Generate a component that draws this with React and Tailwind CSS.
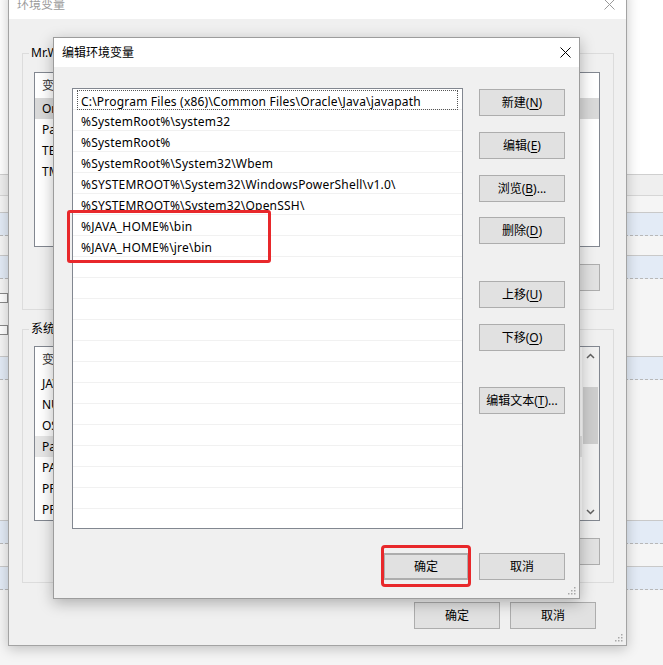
import React from "react";

function Btn({ children, className = "" }) {
  return (
    <div
      className={
        "h-[27px] w-[86px] shrink-0 flex items-center justify-center bg-[#e1e1e1] border border-[#adadad] text-[12px] text-black leading-none " +
        className
      }
    >
      {children}
    </div>
  );
}

function U({ children }) {
  return <span className="underline underline-offset-[2px]">{children}</span>;
}

function XIcon({ color = "#000" }) {
  return (
    <svg width="11" height="11" viewBox="0 0 11 11">
      <path d="M0.5 0.5 L10.5 10.5 M10.5 0.5 L0.5 10.5" stroke={color} strokeWidth="1" fill="none" />
    </svg>
  );
}

function Grip({ className = "" }) {
  const dots = [
    [8, 2],
    [8, 5],
    [5, 5],
    [8, 8],
    [5, 8],
    [2, 8],
  ];
  return (
    <svg className={className} width="11" height="11" viewBox="0 0 11 11">
      {dots.map(([x, y], i) => (
        <rect key={i} x={x} y={y} width="1.5" height="1.5" fill="#a8a8a8" />
      ))}
    </svg>
  );
}

function Band() {
  return (
    <div className="flex flex-col">
      <div className="h-px bg-[#c9c9c9]" />
      <div className="h-[23px] bg-[#e3ebf6] border-b border-dashed border-[#b8b8b8]" />
    </div>
  );
}

const pathRows = [
  "C:\\Program Files (x86)\\Common Files\\Oracle\\Java\\javapath",
  "%SystemRoot%\\system32",
  "%SystemRoot%",
  "%SystemRoot%\\System32\\Wbem",
  "%SYSTEMROOT%\\System32\\WindowsPowerShell\\v1.0\\",
  "%SYSTEMROOT%\\System32\\OpenSSH\\",
  "%JAVA_HOME%\\bin",
  "%JAVA_HOME%\\jre\\bin",
];

export default function App() {
  const rows = [];
  for (let i = 0; i < 21; i++) rows.push(pathRows[i] || "");

  return (
    <div className="relative w-[663px] h-[665px] overflow-hidden bg-white font-['Noto_Sans','Noto_Sans_CJK_SC',sans-serif] text-[12px] text-black">
      {/* Background window */}
      <div className="absolute inset-0 flex flex-col">
        <div className="h-[174px] bg-white" />
        <div className="h-px bg-[#cfcfcf]" />
        <div className="h-[20px] bg-[#efefef]" />
        <div className="h-px bg-[#d6d6d6]" />
        <div className="h-[16px] bg-[#f5f5f5]" />
        <Band />
        <div className="h-[19px] bg-[#f5f5f5]" />
        <Band />
        <div className="h-[77px] bg-[#f5f5f5]" />
        <Band />
        <div className="h-[140px] bg-[#f5f5f5]" />
        <Band />
        <div className="h-[22px] bg-[#f5f5f5]" />
        <Band />
        <div className="flex-1 bg-[#f5f5f5]" />
      </div>
      <div className="absolute left-[-2px] top-[293px] w-[10px] h-[10px] border border-[#8a8a8a] bg-white" />
      <div className="absolute left-[-2px] top-[325px] w-[10px] h-[10px] border border-[#8a8a8a] bg-white" />

      {/* Outer dialog: 环境变量 */}
      <div className="absolute left-[8px] top-[-12px] w-[619px] h-[658px] flex flex-col border border-[#a3a3a3] shadow-[0_3px_12px_rgba(0,0,0,0.22)]">
        <div className="h-[30px] bg-white flex items-center justify-between pl-[8px] pr-[11px]">
          <span className="text-[#9a9a9a] text-[12px] pt-[1px]">环境变量</span>
          <XIcon color="#9a9a9a" />
        </div>
        <div className="relative flex-1 bg-[#f0f0f0] flex flex-col pl-[13px] pt-[34px]">
          {/* User variables group */}
          <div className="relative w-[592px] h-[257px] border border-[#dcdcdc] flex flex-col pl-[11px] pt-[18px]">
            <span className="absolute left-[6px] top-[-10px] px-[2px] bg-[#f0f0f0] text-[12px]">
              Mr.Wang 的用户变量(<U>U</U>)
            </span>
            <div className="w-[566px] h-[175px] border border-[#828790] bg-white flex flex-col">
              <div className="h-[25px] flex items-center pl-[7px] text-[#333]">变量</div>
              <div className="h-[21px] flex items-center pl-[7px] bg-[#d9d9d9]">OneDrive</div>
              <div className="h-[21px] flex items-center pl-[7px]">Path</div>
              <div className="h-[21px] flex items-center pl-[7px]">TEMP</div>
              <div className="h-[21px] flex items-center pl-[7px]">TMP</div>
            </div>
            <div className="flex justify-end gap-[10px] pr-[13px] mt-[17px]">
              <Btn>新建(<U>N</U>)...</Btn>
              <Btn>编辑(<U>E</U>)...</Btn>
              <Btn>删除(<U>D</U>)</Btn>
            </div>
          </div>

          {/* System variables group */}
          <div className="relative w-[592px] h-[254px] mt-[19px] border border-[#dcdcdc] flex flex-col pl-[11px] pt-[16px]">
            <span className="absolute left-[6px] top-[-10px] px-[2px] bg-[#f0f0f0] text-[12px]">
              系统变量(<U>S</U>)
            </span>
            <div className="relative w-[566px] h-[175px] border border-[#828790] bg-white flex flex-col">
              <div className="h-[26px] flex items-center pl-[7px] text-[#333]">变量</div>
              <div className="h-[21px] flex items-center pl-[7px]">JAVA_HOME</div>
              <div className="h-[21px] flex items-center pl-[7px]">NUMBER_OF_PROCESSORS</div>
              <div className="h-[21px] flex items-center pl-[7px]">OS</div>
              <div className="h-[21px] flex items-center pl-[7px] bg-[#e6e6e6]">Path</div>
              <div className="h-[21px] flex items-center pl-[7px]">PATHEXT</div>
              <div className="h-[21px] flex items-center pl-[7px]">PROCESSOR_ARCHITECTURE</div>
              <div className="h-[21px] flex items-center pl-[7px]">PROCESSOR_IDENTIFIER</div>
              <div className="absolute right-0 top-0 bottom-0 w-[17px] bg-[#f0f0f0] flex flex-col items-center">
                <div className="h-[17px] flex items-center justify-center">
                  <svg width="9" height="6" viewBox="0 0 9 6">
                    <path d="M1 5 L4.5 1.5 L8 5" stroke="#606060" strokeWidth="1.5" fill="none" />
                  </svg>
                </div>
                <div className="mt-[23px] w-[15px] h-[57px] bg-[#cdcdcd]" />
                <div className="flex-1" />
                <div className="h-[17px] flex items-center justify-center">
                  <svg width="9" height="6" viewBox="0 0 9 6">
                    <path d="M1 1 L4.5 4.5 L8 1" stroke="#606060" strokeWidth="1.5" fill="none" />
                  </svg>
                </div>
              </div>
            </div>
            <div className="flex justify-end gap-[10px] pr-[13px] mt-[17px]">
              <Btn>新建(<U>W</U>)...</Btn>
              <Btn>编辑(<U>I</U>)...</Btn>
              <Btn>删除(<U>L</U>)</Btn>
            </div>
          </div>

          <div className="flex justify-end gap-[10px] pr-[30px] mt-[19px]">
            <Btn>确定</Btn>
            <Btn>取消</Btn>
          </div>
          <Grip className="absolute right-[2px] bottom-[2px]" />
        </div>
      </div>

      {/* Inner dialog: 编辑环境变量 */}
      <div className="absolute left-[53px] top-[37px] w-[527px] h-[562px] flex flex-col border border-[#9c9c9c] shadow-[0_4px_14px_rgba(0,0,0,0.28)]">
        <div className="h-[29px] bg-white flex items-center justify-between pl-[8px] pr-[8px]">
          <span className="text-[12px] pt-[1px]">编辑环境变量</span>
          <XIcon />
        </div>
        <div className="relative flex-1 bg-[#f0f0f0] flex flex-col pl-[18px] pt-[21px]">
          <div className="flex">
            <div className="w-[391px] h-[441px] border border-[#828790] bg-white flex flex-col overflow-hidden">
              {rows.map((r, i) => (
                <div
                  key={i}
                  className="h-[21px] shrink-0 flex items-center border-b border-[#f1f1f1] px-[4px]"
                >
                  <div
                    className={
                      i === 0
                        ? "w-full h-[20px] mt-[1px] flex items-center pl-[3px] border border-dotted border-[#555] whitespace-nowrap"
                        : "w-full h-[20px] flex items-center pl-[4px] whitespace-nowrap"
                    }
                  >
                    <span className="relative top-[2px] tracking-[0.2px]">{r}</span>
                  </div>
                </div>
              ))}
            </div>
            <div className="flex flex-col ml-[16px] pt-[1px]">
              <Btn>新建(<U>N</U>)</Btn>
              <Btn className="mt-[16px]">编辑(<U>E</U>)</Btn>
              <Btn className="mt-[16px]">浏览(<U>B</U>)...</Btn>
              <Btn className="mt-[15px]">删除(<U>D</U>)</Btn>
              <Btn className="mt-[37px]">上移(<U>U</U>)</Btn>
              <Btn className="mt-[16px]">下移(<U>O</U>)</Btn>
              <Btn className="mt-[36px]">编辑文本(<U>T</U>)...</Btn>
            </div>
          </div>
          <div className="flex justify-end gap-[10px] pr-[14px] mt-[24px]">
            <Btn className="border-2 border-[#0078d7]">确定</Btn>
            <Btn>取消</Btn>
          </div>
          <Grip className="absolute right-[2px] bottom-[2px]" />
        </div>
      </div>

      {/* Red annotation boxes */}
      <div className="absolute left-[67px] top-[210px] w-[204px] h-[53px] border-[3px] border-[#e8282b] rounded-[3px]" />
      <div className="absolute left-[381px] top-[545px] w-[90px] h-[42px] border-[3px] border-[#e8282b] rounded-[4px]" />
    </div>
  );
}
